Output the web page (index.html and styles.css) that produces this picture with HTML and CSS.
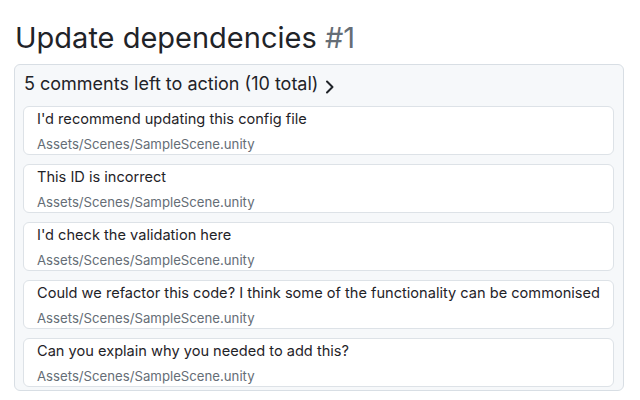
FILE: index.html
```html
<!DOCTYPE html>
<html>
<head>
<meta charset="utf-8">
<link rel="stylesheet" href="styles.css">
</head>
<body>
<div class="page">
  <h1 class="title">Update dependencies <span class="num">#1</span></h1>
  <div class="thread">
    <div class="summary">
      <span>5 comments left to action (10 total)</span>
      <svg class="chev" width="10" height="14" viewBox="0 0 10 14"><polyline points="2,1.5 7.5,7 2,12.5" fill="none" stroke="#1f2328" stroke-width="2" stroke-linecap="round" stroke-linejoin="round"/></svg>
    </div>
    <div class="list">
      <div class="card"><div class="ctitle">I'd recommend updating this config file</div><div class="cpath">Assets/Scenes/SampleScene.unity</div></div>
      <div class="card"><div class="ctitle">This ID is incorrect</div><div class="cpath">Assets/Scenes/SampleScene.unity</div></div>
      <div class="card"><div class="ctitle">I'd check the validation here</div><div class="cpath">Assets/Scenes/SampleScene.unity</div></div>
      <div class="card"><div class="ctitle">Could we refactor this code? I think some of the functionality can be commonised</div><div class="cpath">Assets/Scenes/SampleScene.unity</div></div>
      <div class="card"><div class="ctitle">Can you explain why you needed to add this?</div><div class="cpath">Assets/Scenes/SampleScene.unity</div></div>
    </div>
  </div>
</div>
</body>
</html>
```
FILE: styles.css
```css
html, body {
  margin: 0;
  padding: 0;
  background: #ffffff;
}
.page {
  padding: 18px 16px 0 14px;
  font-family: Inter, "Liberation Sans", Arial, sans-serif;
  color: #1f2328;
}
.title {
  margin: 0 0 6px 1px;
  font-size: 29px;
  line-height: 40px;
  font-weight: 400;
  color: #1f2328;
}
.num {
  color: #656d76;
}
.thread {
  background: #f6f8fa;
  border: 1px solid #d8dee4;
  border-radius: 6px;
  width: 608px;
}
.summary {
  display: flex;
  align-items: center;
  padding: 5px 9px 8px;
  font-size: 18px;
  line-height: 28px;
}
.chev {
  margin-left: 7px;
  margin-top: 6px;
}
.list {
  display: flex;
  flex-direction: column;
  gap: 9px;
  padding: 0 9px 3px 8px;
}
.card {
  background: #ffffff;
  border: 1px solid #dde2e7;
  border-radius: 6px;
  padding: 2px 13px 0;
  height: 45px;
}
.ctitle {
  font-size: 14.6px;
  line-height: 20px;
  white-space: nowrap;
}
.cpath {
  margin-top: 6px;
  font-size: 13.2px;
  line-height: 18px;
  color: #656d76;
}
```
